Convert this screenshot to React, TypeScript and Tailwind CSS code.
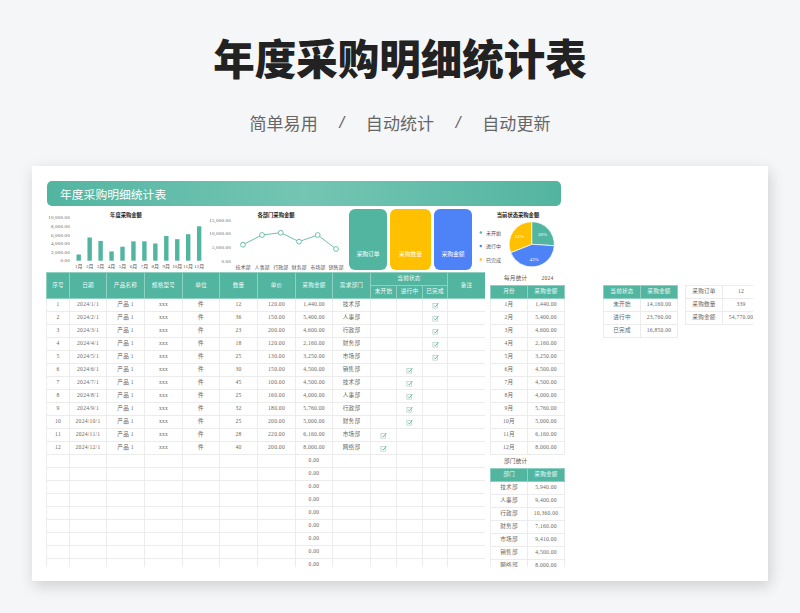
const rows = [
  { date: '2024/1/1', qty: 12, price: '120.00', amount: '1,440.00', dept: '技术部', status: 2 },
  { date: '2024/2/1', qty: 36, price: '150.00', amount: '5,400.00', dept: '人事部', status: 2 },
  { date: '2024/3/1', qty: 23, price: '200.00', amount: '4,600.00', dept: '行政部', status: 2 },
  { date: '2024/4/1', qty: 18, price: '120.00', amount: '2,160.00', dept: '财务部', status: 2 },
  { date: '2024/5/1', qty: 25, price: '130.00', amount: '3,250.00', dept: '市场部', status: 2 },
  { date: '2024/6/1', qty: 30, price: '150.00', amount: '4,500.00', dept: '销售部', status: 1 },
  { date: '2024/7/1', qty: 45, price: '100.00', amount: '4,500.00', dept: '技术部', status: 1 },
  { date: '2024/8/1', qty: 25, price: '160.00', amount: '4,000.00', dept: '人事部', status: 1 },
  { date: '2024/9/1', qty: 32, price: '180.00', amount: '5,760.00', dept: '行政部', status: 1 },
  { date: '2024/10/1', qty: 25, price: '200.00', amount: '5,000.00', dept: '财务部', status: 1 },
  { date: '2024/11/1', qty: 28, price: '220.00', amount: '6,160.00', dept: '市场部', status: 0 },
  { date: '2024/12/1', qty: 40, price: '200.00', amount: '8,000.00', dept: '网络部', status: 0 },
];

const monthly = [1440, 5400, 4600, 2160, 3250, 4500, 4500, 4000, 5760, 5000, 6160, 8000];
const deptStats = [
  ['技术部', '5,940.00'],
  ['人事部', '9,400.00'],
  ['行政部', '10,360.00'],
  ['财务部', '7,160.00'],
  ['市场部', '9,410.00'],
  ['销售部', '4,500.00'],
  ['网络部', '8,000.00'],
];
const statusStats = [
  ['未开始', '14,160.00'],
  ['进行中', '23,760.00'],
  ['已完成', '16,850.00'],
];
const totals = [
  ['采购订单', '12'],
  ['采购数量', '339'],
  ['采购金额', '54,770.00'],
];

const chartFont = "'Liberation Serif','Noto Sans CJK SC',serif";
const td = 'border border-[#ececec] p-0 text-center align-middle leading-none';
const th = 'border border-[#8fd0c2] bg-[#52b5a0] p-0 text-center align-middle font-normal leading-none text-[#eefaf7]';

// checkbox from the sheet: pale square with a green tick running out of the top corner
function Check() {
  return (
    <svg viewBox="0 0 8 8" className="mx-auto block h-[7px] w-[7px]" fill="none">
      <rect x="1" y="1.6" width="5.4" height="5.4" stroke="#b9c9c5" strokeWidth=".8" />
      <path d="M2.4 4.2 3.8 5.6 7.2 1.4" stroke="#52b5a0" strokeWidth="1" />
    </svg>
  );
}

function BarChart() {
  const yLabels = ['10,000.00', '8,000.00', '6,000.00', '4,000.00', '2,000.00', '0.00'];
  return (
    <svg width="159" height="66" fontFamily={chartFont} className="shrink-0">
      <text x="80" y="10.5" fontSize="5.3" fontWeight="700" textAnchor="middle" fill="#222">年度采购金额</text>
      {yLabels.map((label, i) => (
        <text key={label} x="24" y={13.3 + i * 8.6} fontSize="5" textAnchor="end" fill="#666" letterSpacing=".2">{label}</text>
      ))}
      {monthly.map((v, i) => {
        const h = (v / 10000) * 43;
        const cx = 32.7 + i * 10.95;
        return (
          <g key={i}>
            <rect x={cx - 2.2} y={54.7 - h} width="4.4" height={h} fill="#52b5a0" />
            <text x={cx} y="62" fontSize="5" textAnchor="middle" fill="#555">{i + 1}月</text>
          </g>
        );
      })}
    </svg>
  );
}

function LineChart() {
  const pts = [[38, 38.7], [57, 29], [75.7, 26.7], [94, 35.6], [112.7, 29], [131, 43]];
  const depts = ['技术部', '人事部', '行政部', '财务部', '市场部', '销售部'];
  const yLabels = ['15,000.00', '10,000.00', '5,000.00', '0.00'];
  return (
    <svg width="144" height="66" fontFamily={chartFont} className="shrink-0">
      <text x="71" y="10.5" fontSize="5.3" fontWeight="700" textAnchor="middle" fill="#222">各部门采购金额</text>
      {yLabels.map((label, i) => (
        <text key={label} x="26" y={15.6 + i * 13.7} fontSize="5" textAnchor="end" fill="#666" letterSpacing=".2">{label}</text>
      ))}
      <polyline points={pts.map((p) => p.join(',')).join(' ')} fill="none" stroke="#6fc1af" strokeWidth="1" />
      {pts.map(([x, y], i) => (
        <g key={i}>
          <circle cx={x} cy={y} r="2.4" fill="#fff" stroke="#6fc1af" strokeWidth="1" />
          <text x={x} y="63" fontSize="5" textAnchor="middle" fill="#555">{depts[i]}</text>
        </g>
      ))}
    </svg>
  );
}

function PieChart() {
  const cx = 59.7;
  const cy = 38.3;
  const r = 22.6;
  const slices = [
    { pct: 0.26, color: '#52b5a0', label: '26%' },
    { pct: 0.43, color: '#4e82f7', label: '43%' },
    { pct: 0.31, color: '#ffc000', label: '31%' },
  ];
  let start = -Math.PI / 2;
  return (
    <svg width="89" height="66" fontFamily={chartFont} className="shrink-0">
      <text x="46" y="10.5" fontSize="5.3" fontWeight="700" textAnchor="middle" fill="#222">当前状态采购金额</text>
      {slices.map((s) => {
        const end = start + s.pct * Math.PI * 2;
        const mid = (start + end) / 2;
        const large = s.pct > 0.5 ? 1 : 0;
        const d = `M${cx} ${cy}L${cx + r * Math.cos(start)} ${cy + r * Math.sin(start)}A${r} ${r} 0 ${large} 1 ${cx + r * Math.cos(end)} ${cy + r * Math.sin(end)}Z`;
        start = end;
        return (
          <g key={s.label}>
            <path d={d} fill={s.color} stroke="#fff" strokeWidth=".7" />
            <text x={cx + 15 * Math.cos(mid)} y={cy + 15 * Math.sin(mid) + 2} fontSize="5" textAnchor="middle" fill="#fff">{s.label}</text>
          </g>
        );
      })}
      {[
        ['未开始', '#52b5a0', 26.5],
        ['进行中', '#4e82f7', 40],
        ['已完成', '#ffc000', 53.5],
      ].map(([label, color, y]) => (
        <g key={label as string}>
          <circle cx="8.8" cy={y as number} r="1.2" fill={color as string} />
          <text x="14" y={(y as number) + 2} fontSize="5" fill="#555">{label}</text>
        </g>
      ))}
    </svg>
  );
}

function SummaryCard({ label, className }: { label: string; className: string }) {
  return (
    <div className={`flex h-[61px] items-end justify-center rounded-[6px] pb-[12px] text-[5.8px] leading-none text-white ${className}`}>
      {label}
    </div>
  );
}

function MainTable() {
  const blanks = Array.from({ length: 9 });
  return (
    <div className="h-[295px] w-[439px] shrink-0 overflow-hidden">
      <table className="w-[439px] table-fixed border-collapse">
        <colgroup>
          {[23, 37, 38, 38, 37, 38, 38, 37, 38, 26, 26, 25, 38].map((w, i) => (
            <col key={i} style={{ width: w }} />
          ))}
        </colgroup>
        <thead>
          <tr className="h-[13px]">
            {['序号', '日期', '产品名称', '规格型号', '单位', '数量', '单价', '采购金额', '需求部门'].map((h) => (
              <th key={h} rowSpan={2} className={th}>{h}</th>
            ))}
            <th colSpan={3} className={th}>当前状态</th>
            <th rowSpan={2} className={th}>备注</th>
          </tr>
          <tr className="h-[13px]">
            {['未开始', '进行中', '已完成'].map((h) => (
              <th key={h} className={th}>{h}</th>
            ))}
          </tr>
        </thead>
        <tbody>
          {rows.map((r, i) => (
            <tr key={r.date} className="h-[13px]">
              <td className={td}>{i + 1}</td>
              <td className={td}>{r.date}</td>
              <td className={td}>产品 1</td>
              <td className={td}>xxx</td>
              <td className={td}>件</td>
              <td className={td}>{r.qty}</td>
              <td className={td}>{r.price}</td>
              <td className={td}>{r.amount}</td>
              <td className={td}>{r.dept}</td>
              <td className={td}>{r.status === 0 && <Check />}</td>
              <td className={td}>{r.status === 1 && <Check />}</td>
              <td className={td}>{r.status === 2 && <Check />}</td>
              <td className={td}></td>
            </tr>
          ))}
          {blanks.map((_, i) => (
            <tr key={i} className="h-[13px]">
              {Array.from({ length: 13 }).map((_, c) => (
                <td key={c} className={td}>{c === 7 ? '0.00' : ''}</td>
              ))}
            </tr>
          ))}
        </tbody>
      </table>
    </div>
  );
}

function StatTable({ head, data, className }: { head?: string[]; data: string[][]; className: string }) {
  return (
    <table className={`table-fixed border-collapse ${className}`}>
      {head && (
        <thead>
          <tr className="h-[13px]">
            {head.map((h) => (
              <th key={h} className={th}>{h}</th>
            ))}
          </tr>
        </thead>
      )}
      <tbody>
        {data.map((row) => (
          <tr key={row[0]} className="h-[13px]">
            {row.map((c, i) => (
              <td key={i} className={td}>{c}</td>
            ))}
          </tr>
        ))}
      </tbody>
    </table>
  );
}

export default function App() {
  const monthRows = rows.map((r, i) => [`${i + 1}月`, r.amount]);
  return (
    <div className="h-[613px] overflow-hidden bg-[#f5f6f8] pt-[33px] font-['Noto_Sans_CJK_SC',sans-serif]">
      <h1 className="h-[48px] text-center text-[41.5px] font-black leading-[48px] text-[#222]">年度采购明细统计表</h1>
      <div className="mt-[29px] flex h-[24px] items-center justify-center gap-[20px] text-[17px] leading-none tracking-[.1px] text-[#666]">
        <span>简单易用</span>
        <span className="w-[8px] text-center font-['Liberation_Sans',sans-serif] italic">/</span>
        <span>自动统计</span>
        <span className="w-[8px] text-center font-['Liberation_Sans',sans-serif] italic">/</span>
        <span>自动更新</span>
      </div>

      <div className="mx-[32px] mt-[32px] flex h-[415px] bg-white pl-[14px] pt-[15px] text-[5.6px] tracking-[.25px] text-[#666] shadow-[2px_5px_14px_rgba(0,0,0,0.16)] font-['Liberation_Serif','Noto_Sans_CJK_SC',serif]">
        <div className="w-[519px] shrink-0">
          <div className="ml-[1px] flex h-[25px] w-[514px] items-center rounded-[5px] bg-gradient-to-r from-[#52b5a0] via-[#74c5b4] to-[#52b5a0] pl-[13px] text-[11.8px] tracking-normal text-white font-['Noto_Sans_CJK_SC',sans-serif]">
            年度采购明细统计表
          </div>
          <div className="flex h-[66px] tracking-normal">
            <BarChart />
            <LineChart />
            <div className="flex h-[64px] items-start gap-[3px] pt-[3px]">
              <SummaryCard label="采购订单" className="w-[38px] bg-[#52b5a0]" />
              <SummaryCard label="采购数量" className="w-[41px] bg-[#ffc000]" />
              <SummaryCard label="采购金额" className="w-[38px] bg-[#4e82f7]" />
            </div>
            <PieChart />
          </div>
          <div className="flex gap-[5px]">
            <MainTable />
            <div className="h-[295px] w-[75px] shrink-0 overflow-hidden">
              <div className="flex h-[13px] items-center gap-[14px] pl-[14px] text-[#555]">
                <span>每月统计</span>
                <span>2024</span>
              </div>
              <StatTable head={['月份', '采购金额']} data={monthRows} className="w-[75px]" />
              <div className="flex h-[13px] items-center pl-[14px] text-[#555]">部门统计</div>
              <StatTable head={['部门', '采购金额']} data={deptStats} className="w-[75px]" />
            </div>
          </div>
        </div>
        <div className="ml-[38px] flex items-start gap-[7px] pt-[104px]">
          <StatTable head={['当前状态', '采购金额']} data={statusStats} className="w-[75px]" />
          <div className="w-[68px] overflow-hidden">
            <StatTable data={totals} className="w-[75px]" />
          </div>
        </div>
      </div>
    </div>
  );
}
